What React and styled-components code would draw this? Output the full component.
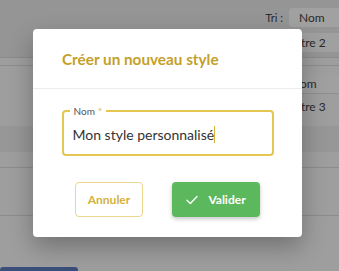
import React from 'react';
import styled, { createGlobalStyle } from 'styled-components';

const GlobalStyle = createGlobalStyle`
  html, body {
    margin: 0;
    padding: 0;
    width: 339px;
    height: 271px;
    overflow: hidden;
    font-family: 'Lato', 'Noto Sans', sans-serif;
  }
`;

const Page = styled.div`
  position: relative;
  width: 339px;
  height: 271px;
  background: #fbfbfb;
  overflow: hidden;
  display: flex;
  flex-direction: column;
`;

const Toolbar = styled.div`
  height: 58px;
  background: #ededed;
  border-bottom: 1px solid #dcdcdc;
  display: flex;
  flex-direction: column;
  align-items: flex-end;
  padding-top: 8px;
  box-sizing: border-box;
  gap: 6px;
`;

const SortRow = styled.div`
  display: flex;
  align-items: center;
  gap: 6px;
  font-size: 11px;
  color: #444;
`;

const SelectBox = styled.div`
  width: 60px;
  margin-right: -10px;
  height: 19px;
  box-sizing: border-box;
  background: #fff;
  border-radius: 4px;
  padding-left: 10px;
  display: flex;
  align-items: center;
  font-size: 12px;
  color: #444;
`;

const SideRow = styled.div`
  width: 50px;
  height: 19px;
  box-sizing: border-box;
  background: ${p => p.$light ? '#fdfdfd' : 'transparent'};
  border-bottom: 1px solid ${p => p.$line ? '#e2e2e2' : 'transparent'};
  display: flex;
  align-items: center;
  padding-left: 2px;
  font-size: 12px;
  color: #444;
`;

const Section = styled.div`
  height: ${p => p.$h}px;
  background: ${p => p.$bg || 'transparent'};
  border-bottom: 1px solid ${p => p.$line ? '#dedede' : 'transparent'};
  display: flex;
  flex-direction: column;
  align-items: flex-end;
  justify-content: ${p => p.$justify || 'flex-start'};
  gap: 4px;
  box-sizing: border-box;
`;

const BottomTab = styled.div`
  margin-top: auto;
  width: 78px;
  height: 4px;
  background: #5c7ec0;
  border-radius: 3px 3px 0 0;
`;

const Overlay = styled.div`
  position: absolute;
  inset: 0;
  background: rgba(0, 0, 0, 0.37);
`;

const Modal = styled.div`
  position: absolute;
  left: 33px;
  top: 29px;
  width: 269px;
  height: 208px;
  background: #fff;
  border-radius: 4px;
  box-shadow: 0 10px 24px rgba(0, 0, 0, 0.28);
  display: flex;
  flex-direction: column;
`;

const ModalHeader = styled.div`
  height: 60px;
  border-bottom: 1px solid #ececec;
  display: flex;
  align-items: center;
  padding: 1px 0 0 29px;
  box-sizing: border-box;
`;

const Title = styled.h2`
  margin: 0;
  font-size: 15.3px;
  font-weight: 700;
  color: #c4a02a;
`;

const Body = styled.div`
  display: flex;
  flex-direction: column;
  align-items: center;
  padding-top: 21px;
`;

const Field = styled.div`
  position: relative;
  width: 212px;
  height: 46px;
  box-sizing: border-box;
  border: 2px solid #e4c650;
  border-radius: 4px;
  padding: 0 0 0 9px;
  display: flex;
  align-items: center;
`;

const Legend = styled.span`
  position: absolute;
  top: -7px;
  left: 6px;
  background: #fff;
  font-size: 10px;
  color: #555;
  padding: 0 4px;
  line-height: 12px;
`;

const Star = styled.span`
  color: #d8b23a;
  margin-left: 3px;
`;

const Value = styled.div`
  font-size: 14px;
  color: #333;
  margin-top: 2px;
  display: flex;
  align-items: center;
`;

const Caret = styled.span`
  display: inline-block;
  width: 1px;
  height: 17px;
  background: #d8b23a;
`;

const Actions = styled.div`
  display: flex;
  justify-content: center;
  gap: 29px;
  padding-top: 26px;
`;

const Button = styled.button`
  height: 35px;
  width: ${p => p.$w}px;
  box-sizing: border-box;
  border-radius: 4px;
  font-family: inherit;
  font-size: 12px;
  font-weight: 700;
  display: flex;
  align-items: center;
  justify-content: center;
  gap: 10px;
  padding: 0;
  border: ${p => p.$primary ? 'none' : '1.5px solid #ecd78c'};
  background: ${p => p.$primary ? '#5cb85c' : '#fff'};
  color: ${p => p.$primary ? '#fff' : '#d3b23e'};
  box-shadow: ${p => p.$primary ? '0 2px 4px rgba(0,0,0,0.22)' : 'none'};
`;

const Check = () => (
  <svg width="12" height="10" viewBox="0 0 12 10" fill="none">
    <path d="M1 5.2 L4.3 8.4 L11 1.4" stroke="#fff" strokeWidth="1.4" strokeLinecap="round" strokeLinejoin="round" />
  </svg>
);

export default function App() {
  return (
    <>
      <GlobalStyle />
      <Page>
        <Toolbar>
          <SortRow>
            Tri :
            <SelectBox>Nom</SelectBox>
          </SortRow>
          <SideRow $light>Titre 2</SideRow>
        </Toolbar>
        <Section $h={8} $line />
        <Section $h={60} $justify="center">
          <SideRow $light $line>Nom</SideRow>
          <SideRow>Titre 3</SideRow>
        </Section>
        <Section $h={26} $bg="#f0f0f0" />
        <Section $h={16} $line />
        <Section $h={48} $line />
        <BottomTab />
        <Overlay />
        <Modal>
          <ModalHeader>
            <Title>Créer un nouveau style</Title>
          </ModalHeader>
          <Body>
            <Field>
              <Legend>Nom<Star>*</Star></Legend>
              <Value>Mon style personnalisé<Caret /></Value>
            </Field>
            <Actions>
              <Button $w={68}>Annuler</Button>
              <Button $w={88} $primary><Check />Valider</Button>
            </Actions>
          </Body>
        </Modal>
      </Page>
    </>
  );
}
